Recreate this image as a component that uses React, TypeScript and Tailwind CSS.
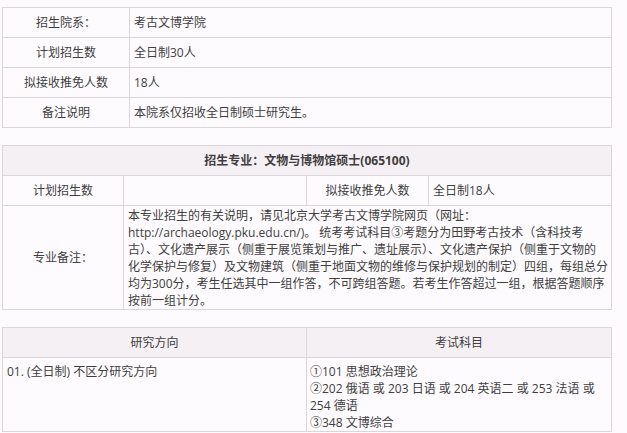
const FONT = "font-['Open_Sans','Noto_Sans_CJK_SC',sans-serif]"

const CELL = 'border border-[#dbd6da] p-0'

const NOTE_LINES = [
  '本专业招生的有关说明，请见北京大学考古文博学院网页（网址：',
  'http://archaeology.pku.edu.cn/)。 统考考试科目③考题分为田野考古技术（含科技考',
  '古）、文化遗产展示（侧重于展览策划与推广、遗址展示）、文化遗产保护（侧重于文物的',
  '化学保护与修复）及文物建筑（侧重于地面文物的维修与保护规划的制定）四组，每组总分',
  '均为300分，考生任选其中一组作答，不可跨组答题。若考生作答超过一组，根据答题顺序',
  '按前一组计分。',
]

const EXAM_LINES = [
  '①101 思想政治理论',
  '②202 俄语 或 203 日语 或 204 英语二 或 253 法语 或',
  '254 德语',
  '③348 文博综合',
]

const DEPT_ROWS: [string, string][] = [
  ['招生院系：', '考古文博学院'],
  ['计划招生数', '全日制30人'],
  ['拟接收推免人数', '18人'],
  ['备注说明', '本院系仅招收全日制硕士研究生。'],
]

export default function App() {
  return (
    <div
      className={`h-[433px] w-[627px] overflow-hidden bg-[#fdfbfd] pt-[7px] pl-[2px] text-[12px] leading-[17px] text-[#403e40] ${FONT}`}
    >
      {/* department summary */}
      <table className="w-[610px] table-fixed border-collapse">
        <colgroup>
          <col className="w-[127px]" />
          <col />
        </colgroup>
        <tbody>
          {DEPT_ROWS.map(([label, value]) => (
            <tr key={label} className="h-[30px]">
              <td className={`${CELL} text-center`}>{label}</td>
              <td className={`${CELL} pl-[4px]`}>{value}</td>
            </tr>
          ))}
        </tbody>
      </table>

      {/* major */}
      <table className="mt-[17px] w-[610px] table-fixed border-collapse">
        <colgroup>
          <col className="w-[121px]" />
          <col className="w-[183px]" />
          <col className="w-[122px]" />
          <col />
        </colgroup>
        <tbody>
          <tr className="h-[30px] bg-[#f5f0f3]">
            <td colSpan={4} className={`${CELL} text-center font-bold`}>
              招生专业：文物与博物馆硕士(065100)
            </td>
          </tr>
          <tr className="h-[30px]">
            <td className={`${CELL} text-center`}>计划招生数</td>
            <td className={CELL} />
            <td className={`${CELL} text-center`}>拟接收推免人数</td>
            <td className={`${CELL} pl-[4px]`}>全日制18人</td>
          </tr>
          <tr className="h-[103px]">
            <td className={`${CELL} text-center`}>专业备注：</td>
            <td colSpan={3} className={`${CELL} pl-[4px] align-top whitespace-nowrap`}>
              <div className="pt-px">
                {NOTE_LINES.map((line) => (
                  <div key={line}>{line}</div>
                ))}
              </div>
            </td>
          </tr>
        </tbody>
      </table>

      {/* directions and exam subjects */}
      <table className="mt-[17px] w-[610px] table-fixed border-collapse">
        <colgroup>
          <col className="w-[304px]" />
          <col />
        </colgroup>
        <tbody>
          <tr className="h-[30px] bg-[#f5f0f3]">
            <td className={`${CELL} text-center`}>研究方向</td>
            <td className={`${CELL} text-center`}>考试科目</td>
          </tr>
          <tr>
            <td className={`${CELL} pt-[5px] pl-[4px] align-top`}>01. (全日制) 不区分研究方向</td>
            <td className={`${CELL} pt-[5px] pl-[3px] align-top whitespace-nowrap`}>
              {EXAM_LINES.map((line) => (
                <div key={line}>{line}</div>
              ))}
            </td>
          </tr>
        </tbody>
      </table>
    </div>
  )
}
